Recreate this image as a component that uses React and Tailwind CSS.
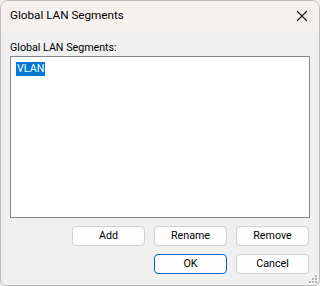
export default function App() {
  return (
    <div
      className="w-[320px] h-[286px] bg-[#ececec] text-[10.7px] text-black"
      style={{ fontFamily: 'Roboto, "Liberation Sans", Arial, sans-serif' }}
    >
      <div className="relative flex h-full w-full flex-col overflow-hidden rounded-t-[8px] rounded-b-[6px] border border-[#bdbdbd] bg-[#f0f0f0]">
        {/* title bar */}
        <div className="flex h-[30px] shrink-0 items-center justify-between bg-[#f5f1ef] pl-[9px] pr-[10px]">
          <span className="text-[11.7px] leading-none">Global LAN Segments</span>
          <svg width="12" height="12" viewBox="0 0 12 12" className="mr-[1px]">
            <path d="M1 1 L11 11 M11 1 L1 11" stroke="#1a1a1a" strokeWidth="1.1" />
          </svg>
        </div>

        {/* body */}
        <div className="flex flex-1 flex-col px-[9px]">
          <div className="mt-[8px] h-[17px] leading-[17px]">Global LAN Segments:</div>
          <div className="h-[162px] border border-[#828790] bg-white pt-[4px] pl-[5px]">
            <span className="inline-block bg-[#0078d7] px-[1px] leading-[14px] text-white">VLAN</span>
          </div>

          <div className="mt-[8px] flex justify-end gap-[9px] pr-[1px]">
            {['Add', 'Rename', 'Remove'].map((t) => (
              <button
                key={t}
                className="h-[20px] w-[73px] rounded-[4px] border border-[#d0d0d0] bg-[#fdfdfd] leading-none"
              >
                {t}
              </button>
            ))}
          </div>
          <div className="mt-[8px] flex justify-end gap-[9px] pr-[1px]">
            <button className="h-[20px] w-[73px] rounded-[4px] border border-[#0067c0] bg-[#fdfdfd] leading-none">
              OK
            </button>
            <button className="h-[20px] w-[73px] rounded-[4px] border border-[#d0d0d0] bg-[#fdfdfd] leading-none">
              Cancel
            </button>
          </div>
        </div>

        {/* size grip */}
        <svg width="9" height="9" viewBox="0 0 9 9" className="absolute bottom-[1px] right-[1px]">
          <g fill="#b5b5b5">
            <rect x="6" y="0" width="2" height="2" />
            <rect x="3" y="3" width="2" height="2" />
            <rect x="6" y="3" width="2" height="2" />
            <rect x="0" y="6" width="2" height="2" />
            <rect x="3" y="6" width="2" height="2" />
            <rect x="6" y="6" width="2" height="2" />
          </g>
        </svg>
      </div>
    </div>
  )
}
